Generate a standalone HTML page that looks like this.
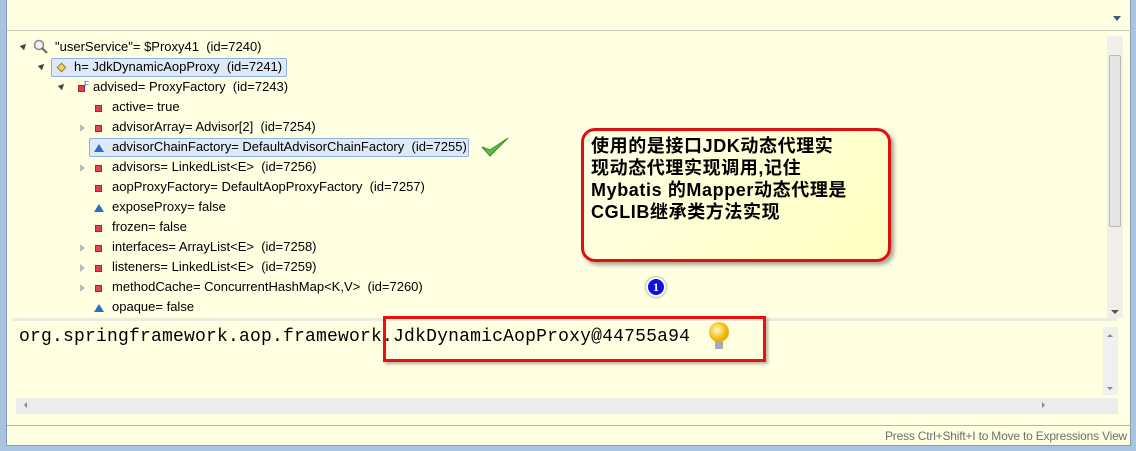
<!DOCTYPE html>
<html><head><meta charset="utf-8"><style>
*{margin:0;padding:0;box-sizing:border-box}
body{width:1136px;height:451px;overflow:hidden;background:#a9c4e0;font-family:"Liberation Sans","Noto Sans CJK SC",sans-serif;position:relative}
.frame{position:absolute;left:6px;top:0;width:1125px;height:446px;background:#ffffe1;border:1px solid #8a9bb0;border-top:none}
.abs{position:absolute}
.row{position:absolute;font-size:13px;color:#000;white-space:nowrap;line-height:16px}
.tri{position:absolute;width:0;height:0}
.tri.open{border-left:3px solid transparent;border-bottom:6px solid #444;border-right:3px solid transparent;transform:rotate(45deg)}
.tri.closed{border-top:4px solid transparent;border-bottom:4px solid transparent;border-left:5px solid #bbb}
.sq{position:absolute;width:7px;height:7px;background:#e04050;border:1px solid #b02030}
.bt{position:absolute;width:0;height:0;border-left:5px solid transparent;border-right:5px solid transparent;border-bottom:8px solid #2a70c0}
</style></head><body>
<div class="frame"></div>
<div class="abs" style="left:7px;top:30px;width:1124px;height:1px;background:#c8c8b8"></div>
<div class="abs" style="left:1113px;top:16px;border-left:4px solid transparent;border-right:4px solid transparent;border-top:5px solid #3a5a80"></div>

<div class="tri open" style="left:21px;top:43px"></div>
<svg class="abs" style="left:33px;top:39px" width="16" height="16"><circle cx="6" cy="6" r="4.5" fill="#eef" stroke="#888" stroke-width="1.5"/><line x1="9" y1="9" x2="14" y2="14" stroke="#666" stroke-width="2"/></svg>
<div class="row" style="left:55px;top:39px">"userService"= $Proxy41&nbsp; (id=7240)</div>

<div class="tri open" style="left:39px;top:63px"></div>
<div class="abs" style="left:51px;top:58px;width:236px;height:19px;background:#dce9f7;border:1px solid #8fb0d8;border-radius:2px"></div>
<div class="abs" style="left:58px;top:64px;width:7px;height:7px;background:#f5d070;border:1px solid #a08020;transform:rotate(45deg)"></div>
<div class="row" style="left:74px;top:59px">h= JdkDynamicAopProxy&nbsp; (id=7241)</div>

<div class="tri open" style="left:59px;top:83px"></div>
<div class="sq" style="left:78px;top:85px"></div>
<div class="row" style="left:84px;top:77px;font-size:8px;color:#36c">F</div>
<div class="row" style="left:93px;top:79px">advised= ProxyFactory&nbsp; (id=7243)</div>

<div class="sq" style="left:95px;top:105px"></div><div class="row" style="left:112px;top:99px">active= true</div>
<div class="tri closed" style="left:80px;top:124px"></div><div class="sq" style="left:95px;top:125px"></div><div class="row" style="left:112px;top:119px">advisorArray= Advisor[2]&nbsp; (id=7254)</div>
<div class="abs" style="left:89px;top:138px;width:380px;height:19px;background:#dce9f7;border:1px solid #8fb0d8;border-radius:2px"></div>
<div class="bt" style="left:94px;top:144px"></div><div class="row" style="left:112px;top:139px">advisorChainFactory= DefaultAdvisorChainFactory&nbsp; (id=7255)</div>
<svg class="abs" style="left:480px;top:135px" width="30" height="24"><path d="M2 12 L10 21 L28 3 L10 15 Z" fill="#5cc040" stroke="#3a8a28" stroke-width="1"/></svg>
<div class="tri closed" style="left:80px;top:164px"></div><div class="sq" style="left:95px;top:165px"></div><div class="row" style="left:112px;top:159px">advisors= LinkedList&lt;E&gt;&nbsp; (id=7256)</div>
<div class="sq" style="left:95px;top:185px"></div><div class="row" style="left:112px;top:179px">aopProxyFactory= DefaultAopProxyFactory&nbsp; (id=7257)</div>
<div class="bt" style="left:94px;top:204px"></div><div class="row" style="left:112px;top:199px">exposeProxy= false</div>
<div class="sq" style="left:95px;top:225px"></div><div class="row" style="left:112px;top:219px">frozen= false</div>
<div class="tri closed" style="left:80px;top:244px"></div><div class="sq" style="left:95px;top:245px"></div><div class="row" style="left:112px;top:239px">interfaces= ArrayList&lt;E&gt;&nbsp; (id=7258)</div>
<div class="tri closed" style="left:80px;top:264px"></div><div class="sq" style="left:95px;top:265px"></div><div class="row" style="left:112px;top:259px">listeners= LinkedList&lt;E&gt;&nbsp; (id=7259)</div>
<div class="tri closed" style="left:80px;top:284px"></div><div class="sq" style="left:95px;top:285px"></div><div class="row" style="left:112px;top:279px">methodCache= ConcurrentHashMap&lt;K,V&gt;&nbsp; (id=7260)</div>
<div class="bt" style="left:94px;top:304px"></div><div class="row" style="left:112px;top:299px">opaque= false</div>

<div class="abs" style="left:1107px;top:36px;width:16px;height:282px;background:#f0f0e8"></div>
<div class="abs" style="left:1109px;top:55px;width:12px;height:172px;background:#e6e6e6;border:1px solid #b8b8b8;border-radius:2px"></div>
<div class="abs" style="left:1111px;top:310px;border-left:4px solid transparent;border-right:4px solid transparent;border-top:4px solid #555"></div>

<div class="abs" style="left:581px;top:128px;width:310px;height:134px;background:linear-gradient(135deg,#ffffe8,#ffffc0);border:3px solid #e01010;border-radius:14px;box-shadow:3px 3px 4px rgba(0,0,0,.35)"></div>
<div class="abs" style="left:591px;top:135px;width:300px;font:bold 18px/22px 'Liberation Sans','Noto Sans CJK SC',sans-serif;color:#000;letter-spacing:0.6px">使用的是接口JDK动态代理实<br>现动态代理实现调用,记住<br>Mybatis 的Mapper动态代理是<br>CGLIB继承类方法实现</div>
<div class="abs" style="left:646px;top:277px;width:20px;height:20px;border-radius:50%;background:#1010e0;border:2px solid #fff;box-shadow:0 0 2px #555;color:#fff;font:bold 12px/16px 'Liberation Serif',serif;text-align:center">1</div>

<div class="abs" style="left:12px;top:318px;width:1105px;height:3px;background:#ececdc"></div>
<div class="row" style="left:19px;top:326px;font:18px/22px 'Liberation Mono',monospace;letter-spacing:0.2px">org.springframework.aop.framework.JdkDynamicAopProxy@44755a94</div>
<div class="abs" style="left:383px;top:316px;width:383px;height:46px;border:3px solid #e81010;box-shadow:2px 2px 3px rgba(0,0,0,.3)"></div>
<svg class="abs" style="left:706px;top:320px" width="26" height="32"><defs><radialGradient id="g" cx=".4" cy=".4"><stop offset="0" stop-color="#fffbc0"/><stop offset="1" stop-color="#f0b000"/></radialGradient></defs><circle cx="13" cy="12" r="10" fill="url(#g)"/><rect x="9" y="21" width="8" height="8" rx="1" fill="#aaa"/></svg>
<div class="abs" style="left:1103px;top:327px;width:15px;height:68px;background:#f0f0f0"></div>
<div class="abs" style="left:1107px;top:334px;border-left:3px solid transparent;border-right:3px solid transparent;border-bottom:3px solid #888"></div>
<div class="abs" style="left:1107px;top:387px;border-left:3px solid transparent;border-right:3px solid transparent;border-top:3px solid #888"></div>
<div class="abs" style="left:16px;top:398px;width:1102px;height:16px;background:#ececec"></div>
<div class="abs" style="left:24px;top:402px;border-top:3px solid transparent;border-bottom:3px solid transparent;border-right:3px solid #888"></div>
<div class="abs" style="left:1042px;top:402px;border-top:3px solid transparent;border-bottom:3px solid transparent;border-left:3px solid #888"></div>
<div class="abs" style="left:7px;top:425px;width:1124px;height:1px;background:#b8b8a8"></div>
<div class="row" style="left:885px;top:428px;font-size:12px;color:#707070;letter-spacing:-0.2px">Press Ctrl+Shift+I to Move to Expressions View</div>
</body></html>
